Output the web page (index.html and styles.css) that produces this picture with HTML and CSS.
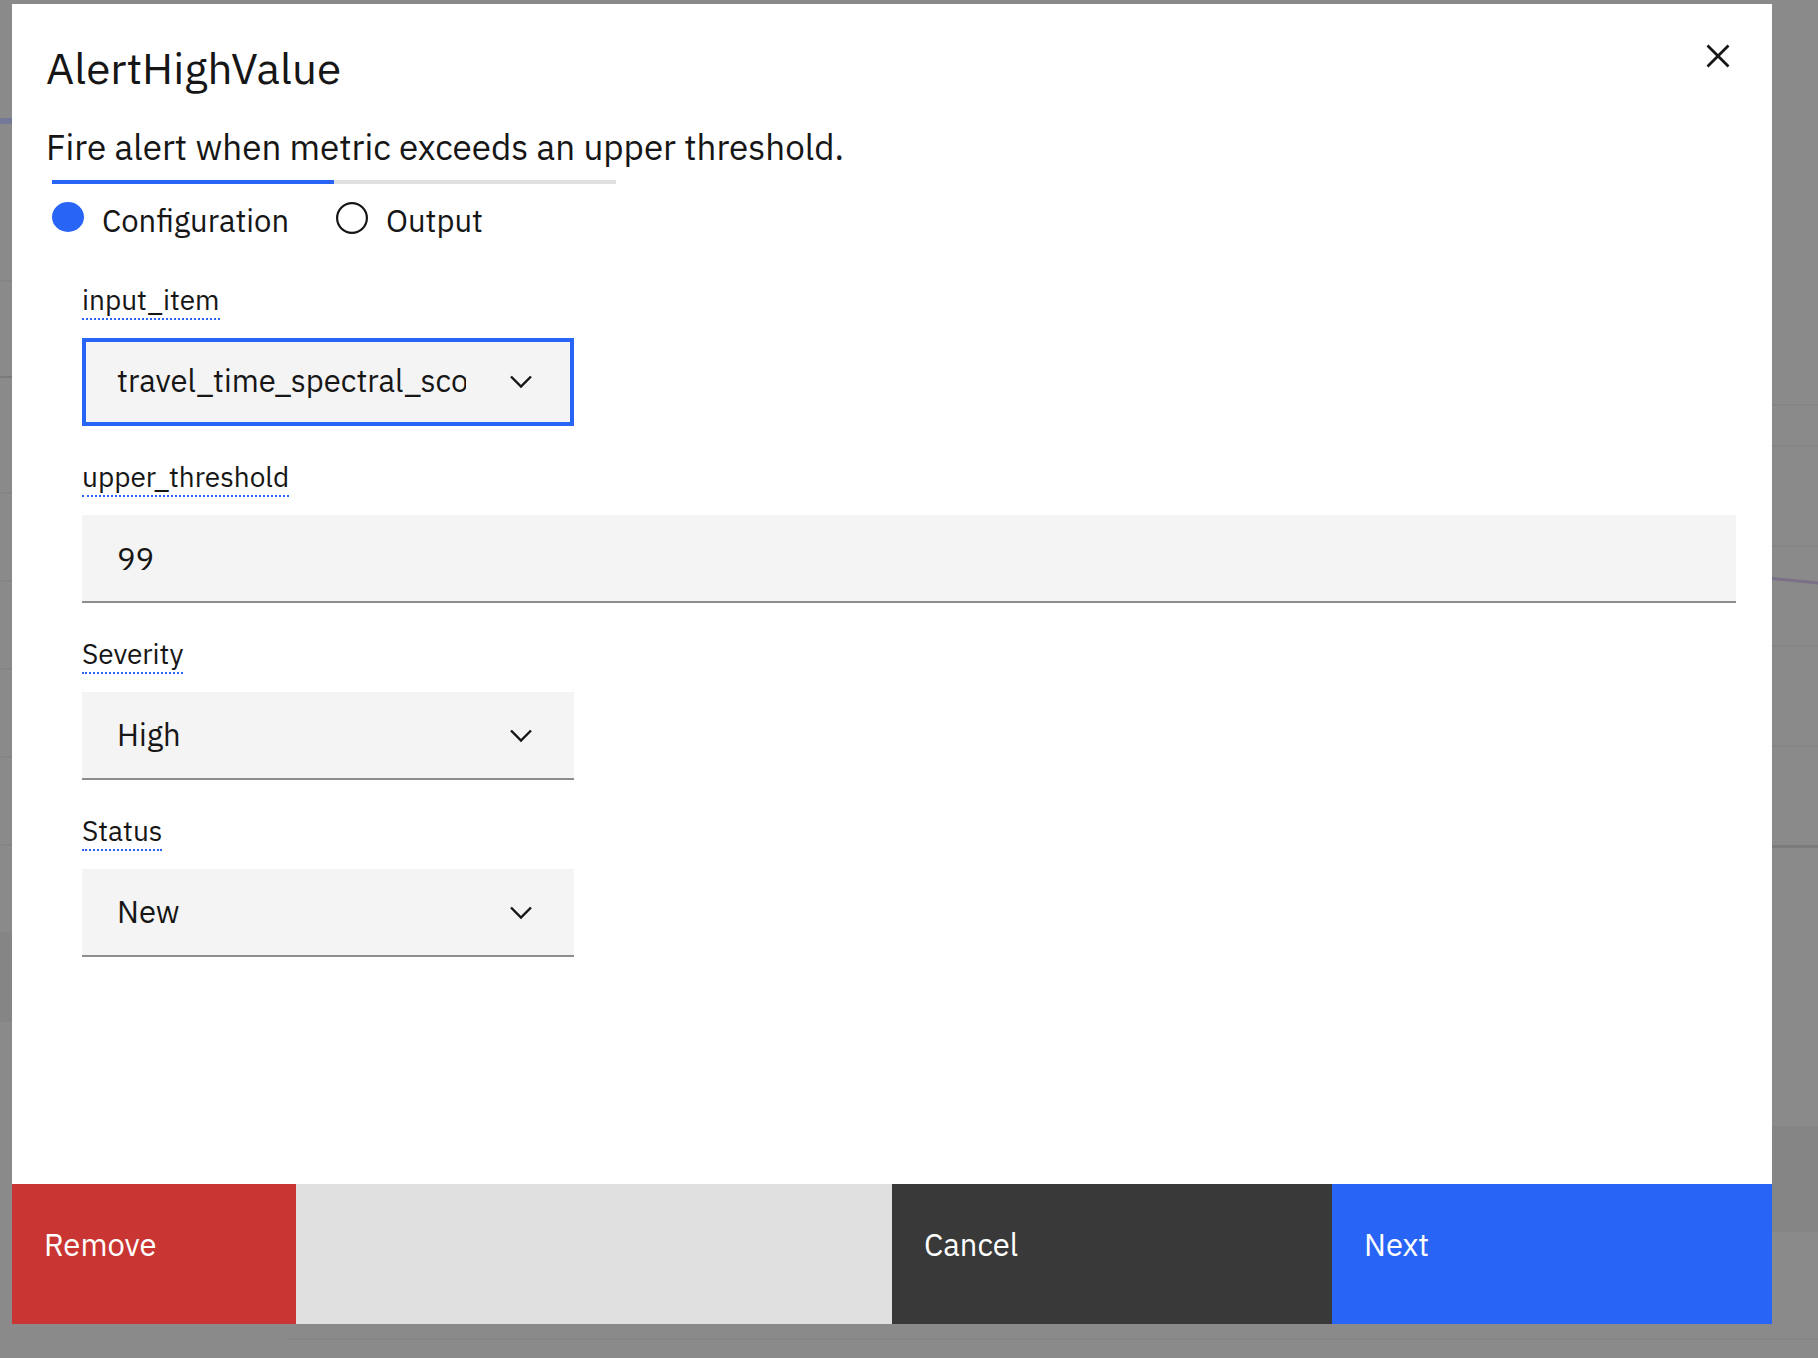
FILE: index.html
```
<!DOCTYPE html>
<html lang="en">
<head>
<meta charset="utf-8">
<meta name="viewport" content="width=device-width, initial-scale=1">
<title>AlertHighValue</title>
<link rel="stylesheet" href="styles.css">
</head>
<body>
<div class="backdrop" aria-hidden="true">
  <svg class="chart chart-left" width="12" height="1358" viewBox="0 0 12 1358">
    <rect y="118" width="12" height="6" fill="#74799a"/>
    <g fill="#858585">
      <rect y="280" width="12" height="2"/>
      <rect y="492" width="12" height="2"/>
      <rect y="580" width="12" height="2"/>
      <rect y="668" width="12" height="2"/>
      <rect y="756" width="12" height="2"/>
      <rect y="844" width="12" height="2"/>
      <rect y="932" width="12" height="90"/>
    </g>
    <rect y="376" width="12" height="2" fill="#7b7b7b"/>
  </svg>
  <svg class="chart chart-right" width="46" height="1358" viewBox="0 0 46 1358">
    <g fill="#858585">
      <rect y="404" width="46" height="2"/>
      <rect y="445" width="46" height="2"/>
      <rect y="545" width="46" height="2"/>
      <rect y="645" width="46" height="2"/>
      <rect y="745" width="46" height="2"/>
      <rect y="1126" width="46" height="106"/>
    </g>
    <rect y="845" width="46" height="3" fill="#7b7b7b"/>
    <path d="M0 578.500L46 583" stroke="#7a7088" stroke-width="3" fill="none"/>
  </svg>
  <div class="table-line"></div>
</div>

<main class="modal" role="dialog" aria-labelledby="title">
  <header class="header">
    <div>
      <h1 class="title" id="title">AlertHighValue</h1>
      <p class="description">Fire alert when metric exceeds an upper threshold.</p>
    </div>
    <button class="close" type="button" aria-label="Close">
      <svg width="24" height="24" viewBox="0 0 24 24" fill="none" stroke="#161616" stroke-width="2.800"><path d="M1.500 1.500L22.500 22.500M22.500 1.500L1.500 22.500"/></svg>
    </button>
  </header>

  <ol class="steps">
    <li class="step step-current">
      <button class="step-button" type="button" aria-current="step">
        <svg width="34" height="34" viewBox="0 0 34 34"><ellipse cx="16" cy="15" rx="16" ry="15" fill="#2864f6"/></svg>
        <span>Configuration</span>
      </button>
    </li>
    <li class="step">
      <button class="step-button" type="button">
        <svg width="36" height="34" viewBox="0 0 36 34"><circle cx="18" cy="16" r="14.900" fill="none" stroke="#161616" stroke-width="2.200"/></svg>
        <span>Output</span>
      </button>
    </li>
  </ol>

  <form class="form" id="alert-form">
    <div class="field">
      <label class="label" for="input-item">input_item</label>
      <div class="select">
        <select class="control control-active" id="input-item"><option>travel_time_spectral_score</option></select>
        <svg class="chevron" width="24" height="16" viewBox="0 0 24 16"><path d="M2 2.500L12 12.500L22 2.500" fill="none" stroke="#161616" stroke-width="2.400"/></svg>
      </div>
    </div>
    <div class="field">
      <label class="label" for="upper-threshold">upper_threshold</label>
      <input class="control" id="upper-threshold" type="text" value="99">
    </div>
    <div class="field">
      <label class="label" for="severity">Severity</label>
      <div class="select">
        <select class="control" id="severity"><option>High</option></select>
        <svg class="chevron" width="24" height="16" viewBox="0 0 24 16"><path d="M2 2.500L12 12.500L22 2.500" fill="none" stroke="#161616" stroke-width="2.400"/></svg>
      </div>
    </div>
    <div class="field">
      <label class="label" for="status">Status</label>
      <div class="select">
        <select class="control" id="status"><option>New</option></select>
        <svg class="chevron" width="24" height="16" viewBox="0 0 24 16"><path d="M2 2.500L12 12.500L22 2.500" fill="none" stroke="#161616" stroke-width="2.400"/></svg>
      </div>
    </div>
  </form>

  <footer class="footer">
    <button class="action action-danger" type="button">Remove</button>
    <button class="action action-secondary" type="button">Cancel</button>
    <button class="action action-primary" type="submit" form="alert-form">Next</button>
  </footer>
</main>
</body>
</html>
```
FILE: styles.css
```
* {
  box-sizing: border-box;
}

body {
  position: relative;
  display: flex;
  min-height: 100vh;
  margin: 0;
  padding: 4px 46px 34px 12px;
  background: #8a8a8a;
  color: #161616;
  font-family: "IBM Plex Sans", Roboto, "Liberation Sans", sans-serif;
  font-size: 31px;
  line-height: 38px;
}

button,
input,
select {
  font: inherit;
  color: inherit;
  border: 0;
  border-radius: 0;
  margin: 0;
}

/* Dimmed page behind the dialog */
.backdrop {
  position: absolute;
  inset: 0;
  overflow: hidden;
}

.chart {
  position: absolute;
  top: 0;
}

.chart-left {
  left: 0;
}

.chart-right {
  right: 0;
}

.table-line {
  position: absolute;
  right: 0;
  bottom: 18px;
  left: 288px;
  height: 2px;
  background: #858585;
}

/* Dialog */
.modal {
  position: relative;
  display: flex;
  flex: 1;
  flex-direction: column;
  min-width: 0;
  background: #fff;
}

.header {
  display: flex;
  justify-content: space-between;
  align-items: flex-start;
  padding: 38px 30px 11px 34px;
}

.title {
  margin: 0;
  font-size: 44px;
  font-weight: 400;
  line-height: 52px;
}

.description {
  margin: 31px 0 0;
  font-size: 35px;
  line-height: 44px;
}

.close {
  display: flex;
  padding: 2px 12px;
  background: none;
}

.steps {
  display: flex;
  margin: 0;
  padding: 0 40px;
  list-style: none;
}

.step {
  width: 282px;
  border-top: 4px solid #e0e0e0;
}

.step-current {
  border-color: #2864f6;
}

.step-button {
  display: flex;
  gap: 16px;
  padding: 18px 0 0;
  background: none;
}

.form {
  display: flex;
  flex: 1;
  flex-direction: column;
  gap: 35px;
  padding: 44px 36px 44px 70px;
}

.field {
  display: flex;
  flex-direction: column;
  align-items: flex-start;
  gap: 18px;
}

.label {
  padding-bottom: 2px;
  border-bottom: 2px dotted #2864f6;
  font-size: 28px;
  line-height: 32px;
}

.control {
  width: 100%;
  height: 88px;
  padding: 0 35px;
  border-bottom: 2px solid #8d8d8d;
  background: #f4f4f4;
}

.select {
  display: grid;
  align-items: center;
  width: 492px;
  max-width: 100%;
}

.select .control {
  grid-area: 1 / 1;
  padding-right: 108px;
  appearance: none;
}

.select .control-active {
  border-color: transparent;
  outline: 4px solid #2864f6;
  outline-offset: -4px;
}

.chevron {
  grid-area: 1 / 1;
  justify-self: end;
  margin-right: 41px;
  pointer-events: none;
}

.footer {
  display: grid;
  grid-template-columns: 284px 1fr 25% 25%;
  height: 140px;
  background: #e0e0e0;
}

.action {
  display: flex;
  align-items: flex-start;
  padding: 42px 32px;
  color: #fff;
}

.action-danger {
  background: #c93532;
}

.action-secondary {
  grid-column: 3;
  background: #393939;
}

.action-primary {
  background: #2864f6;
}
```
